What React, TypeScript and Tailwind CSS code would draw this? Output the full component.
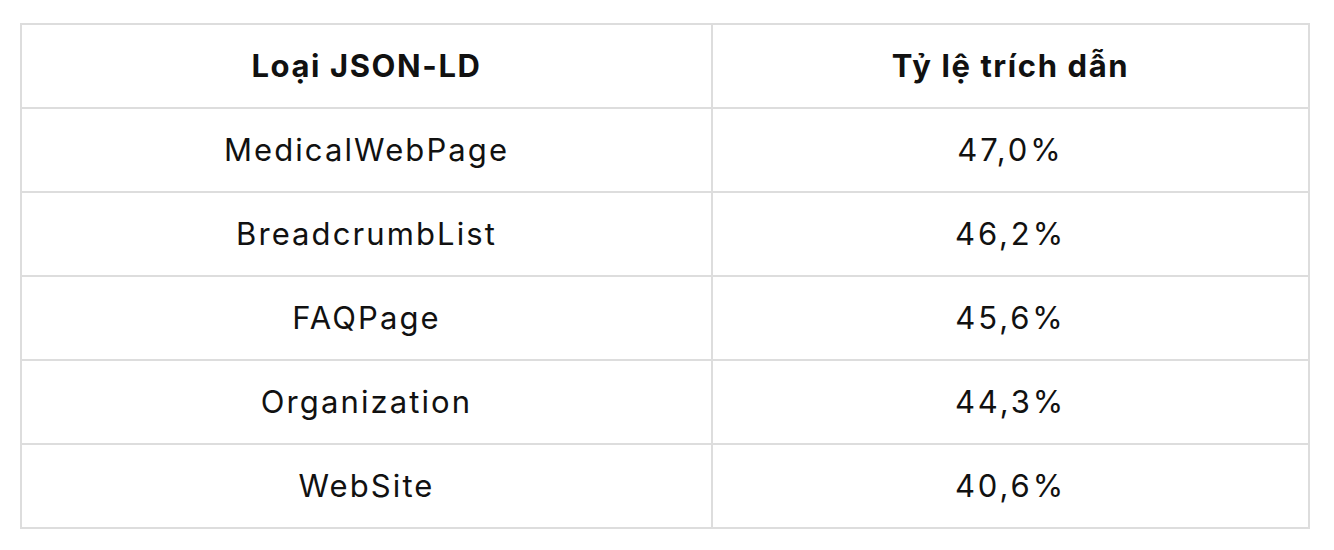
const rows = [
  ["MedicalWebPage", "47,0%"],
  ["BreadcrumbList", "46,2%"],
  ["FAQPage", "45,6%"],
  ["Organization", "44,3%"],
  ["WebSite", "40,6%"],
];

export default function App() {
  return (
    <div className="w-[1334px] h-[550px] bg-white pt-[23px] pl-[20px] font-['Inter',sans-serif] text-[#111]">
      <table className="w-[1290px] border-collapse border-2 border-[#dddddd] table-fixed">
        <colgroup>
          <col className="w-[691px]" />
          <col />
        </colgroup>
        <thead>
          <tr className="h-[84px]">
            <th className="border-2 border-[#dddddd] text-[31px] font-bold tracking-[1.6px] text-center align-middle">
              Loại JSON-LD
            </th>
            <th className="border-2 border-[#dddddd] text-[31px] font-bold tracking-[1.6px] text-center align-middle">
              Tỷ lệ trích dẫn
            </th>
          </tr>
        </thead>
        <tbody>
          {rows.map(([type, rate]) => (
            <tr key={type} className="h-[84px]">
              <td className="border-2 border-[#dddddd] text-[31px] tracking-[2.1px] text-center align-middle">
                {type}
              </td>
              <td className="border-2 border-[#dddddd] text-[31px] tracking-[2.9px] text-center align-middle">
                {rate}
              </td>
            </tr>
          ))}
        </tbody>
      </table>
    </div>
  );
}
